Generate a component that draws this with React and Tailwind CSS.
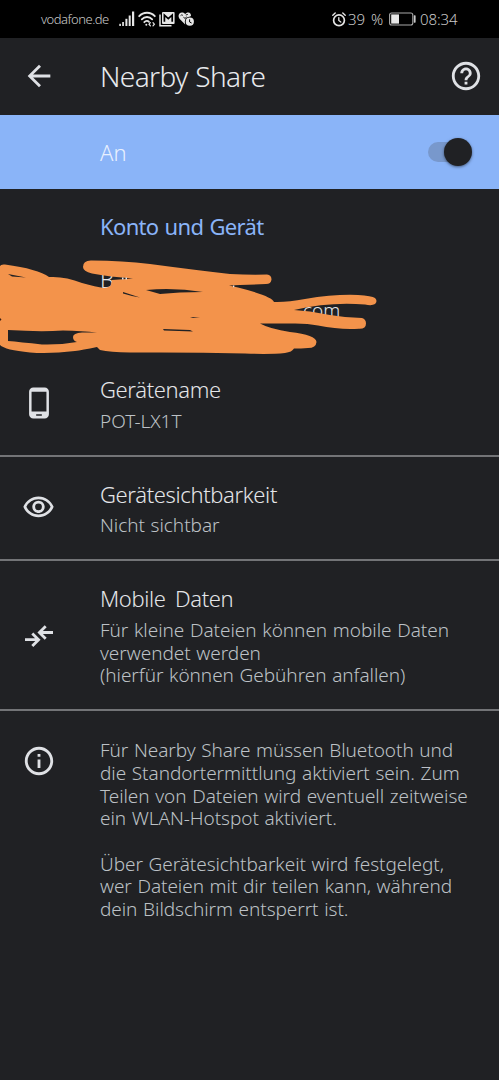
import React from "react";
import {
  MdArrowBack,
  MdHelpOutline,
  MdPhoneAndroid,
  MdOutlineVisibility,
  MdOutlineInfo
} from "react-icons/md";

const StatusBar = () => (
  <div className="h-[38px] bg-black flex items-center justify-between pl-[41px] pr-[41px] text-[#c9c9c9]">
    <div className="flex items-center">
      <span className="text-[13px] leading-none w-[78px] whitespace-nowrap tracking-[-0.5px]">vodafone.de</span>
      {/* Signal */}
      <svg className="w-4 h-4" viewBox="0 0 16 16" fill="#e6e6e6">
        <rect x="0.3" y="12.8" width="1.6" height="2.2" />
        <rect x="3.2" y="11" width="1.7" height="4" />
        <rect x="6.4" y="7.8" width="2" height="7.2" />
        <rect x="9.7" y="4.5" width="2" height="10.5" />
        <rect x="13" y="0.5" width="2.2" height="14.5" />
      </svg>
      {/* Wifi */}
      <svg className="w-[18px] h-4 ml-[3px]" viewBox="0 0 18 16" fill="none" stroke="#e6e6e6" strokeWidth="1.8" strokeLinecap="round">
        <path d="M1.2 5.2C5.4 0.6 12.6 0.6 16.8 5.2" />
        <path d="M3.8 8.4C6.7 5.2 11.3 5.2 14.2 8.4" />
        <path d="M6.3 11.2C7.8 9.6 9.8 9.6 11 10.8" />
        <circle cx="8.3" cy="13.7" r="1" fill="#e6e6e6" stroke="none" />
        <path d="M12.4 11.6L11 13.2L12.4 14.8M15 11.6L16.4 13.2L15 14.8" strokeWidth="1.2" />
      </svg>
      {/* Mail */}
      <svg className="w-4 h-4 ml-[3px]" viewBox="0 0 16 16">
        <path d="M1 3.5V14.8H12.5" fill="none" stroke="#e6e6e6" strokeWidth="1.5" />
        <rect x="3" y="1" width="12.6" height="12" rx="1" fill="#e6e6e6" />
        <path d="M5.4 10.8V4.2L9.3 7.6L13.2 4.2V10.8" fill="none" stroke="#000" strokeWidth="1.7" />
      </svg>
      {/* Heart with clock */}
      <svg className="w-[17px] h-4 ml-[3px]" viewBox="0 0 17 16">
        <path d="M7.2 13.5L1.5 7.8C-0.6 5 1 1.6 4 1.6C5.5 1.6 6.6 2.3 7.2 3.1C8 2.1 9 1.5 10.4 1.6C12 1.8 13 3 13 5L8 8Z" fill="#e6e6e6" />
        <path d="M2.6 4.6C3.4 3.6 4.2 3.8 5 4.6M5.4 6.2L7 7.4L8.8 5.8M7.8 4L9.8 3.4" fill="none" stroke="#000" strokeWidth="0.9" />
        <circle cx="11.8" cy="10.7" r="5" fill="#000" />
        <circle cx="11.8" cy="10.7" r="4.1" fill="#e6e6e6" />
        <path d="M11.6 8.3V11L13.6 12" fill="none" stroke="#000" strokeWidth="1" />
      </svg>
    </div>
    <div className="flex items-center text-[15px] leading-none">
      {/* Alarm */}
      <svg className="w-[14px] h-[15px]" viewBox="0 0 14 15" fill="none" stroke="#e6e6e6" strokeLinecap="round">
        <circle cx="7" cy="8.3" r="5.4" strokeWidth="1.7" />
        <path d="M0.8 3.2L3.2 1M13.2 3.2L10.8 1" strokeWidth="1.4" />
        <path d="M6.8 5.6V8.5L8.8 10" strokeWidth="1.3" />
      </svg>
      <span className="w-[41px] ml-[2px] whitespace-nowrap [word-spacing:2px]">39 %</span>
      {/* Battery */}
      <svg className="w-[27px] h-[14px]" viewBox="0 0 27 14">
        <rect x="0.6" y="1" width="23.2" height="12" rx="2" fill="none" stroke="#a8a8a8" strokeWidth="1.1" />
        <rect x="2.2" y="2.4" width="7.8" height="9.2" fill="#e8e8e8" />
        <rect x="24.8" y="3.3" width="1.8" height="7.4" rx="0.6" fill="#c9c9c9" />
      </svg>
      <span className="ml-[4px] w-[38px] whitespace-nowrap tracking-[-0.1px]">08:34</span>
    </div>
  </div>
);

const MobileDataIcon = () => (
  <svg className="w-[34px] h-[34px]" viewBox="0 0 34 34" fill="none" stroke="#dfe1e5" strokeWidth="2.8">
    <path d="M3 20.7H16M10.3 14.4L16.6 20.7L10.3 27" />
    <path d="M31 13.5H18M23.7 7.2L17.4 13.5L23.7 19.8" />
  </svg>
);

const Row = ({ icon, iconClass, title, children }) => (
  <div className="flex pt-[22px] pb-[22.5px] border-b-2 border-[#737477]">
    <div className={`w-[100px] pl-[22px] shrink-0 text-[#dfe1e5] ${iconClass}`}>{icon}</div>
    <div>
      <h2 className="text-[22px] leading-[30px] text-[#e4e5e8] whitespace-nowrap tracking-[-0.36px] [word-spacing:4px]">{title}</h2>
      <div className="mt-[5.5px] text-[19px] leading-[22.67px] text-[#bdc1c6] whitespace-nowrap tracking-[-0.04px] [word-spacing:0.8px]">
        {children}
      </div>
    </div>
  </div>
);

// Marker strokes that hide the account name and address
const Scribble = () => (
  <svg className="absolute left-0 top-0 w-[400px] h-[110px]" viewBox="0 250 400 110">
    <path
      fill="#f3934b"
      fillRule="evenodd"
      d="M0 266Q1 264 5 264.5Q38 269 49 277Q65 276 82 283Q96 287 104 288Q111 287 111 284L112 280L133 278.5L111 276.5L101 275L92 273.5Q83 271 83 267Q83 260 92 260.5Q122 260.500 150 264Q195 270 230 274Q250 275 267 274.500Q271.500 275 271.500 279.500Q271 284 266 284L240 285L229 285.500L238 287.500Q272 296 274 302Q287 302.500 305 299Q335 294 358 295Q372 296 375 298Q378 301 375 304Q372 306 365 304.500Q330 301.500 294 310L310 311.500Q328 315 345 317L362 318Q366 319 366 323.500Q366 329 359 328.700Q340 330 318 325.500Q306 323 290 323.500L260 323.500Q270 329 290 332Q316 335 316.500 342Q316 348 308 348L301 348.500L294 348.500Q292 352 285 353Q270 354.500 245 353.500Q190 352 130 352.500Q110 352 100 350L97 347Q82 350 75 351Q50 354 30 352.500Q5 350 0 345Z
         M8 330Q40 332 63 330.500Q82 331 97 332.500L82 332.500Q73 333 73 337Q73 341 77 342Q60 345 42 344.500Q20 342 8 341Z
         M8 274L26 277.500L12 276.500Z
         M146 290Q175 287.500 203 292L180 292.500L160 294Z
         M123 292L140 297.500L132 296L123 293.500Z
         M163 329L190 330L193 331.500L164 330.500Z
         M190 317L200 317.500L193 318Z"
    />
    <path d="M0 318L1.500 319.500L0 321Z" fill="#3a1d12" />
    <path d="M122 277.500h1.500v2h-1.500zM125.500 277.500h1.500v2h-1.500zM233 285.500h1.300v1.800h-1.300z" fill="#e4e5e8" />
  </svg>
);

const App = () => {
  return (
    <div className="w-[499px] h-[1080px] bg-[#202124] overflow-hidden font-['Noto_Sans','Open_Sans',sans-serif] font-light">
      <StatusBar />

      {/* Header */}
      <header className="h-[77px] flex items-center pl-[22px] pr-[16px] pb-[2px]">
        <MdArrowBack className="w-[34px] h-[34px] text-[#dfe1e5]" />
        <h1 className="ml-[44px] flex-1 text-[28px] leading-none text-[#e8eaed] tracking-[-0.6px] [word-spacing:1px]">Nearby Share</h1>
        <MdHelpOutline className="w-[34px] h-[34px] text-[#dfe1e5]" />
      </header>

      {/* Main switch */}
      <div className="h-[74px] bg-[#8ab4f8] flex items-center justify-between pl-[100px] pr-[27px]">
        <span className="text-[22px] leading-none text-[#e8f0fe]">An</span>
        <div className="w-[44px] h-7 flex items-center relative">
          <div className="w-[38px] h-5 rounded-full bg-[#7898cc]" />
          <div className="absolute right-0 top-0 w-7 h-7 rounded-full bg-[#202124] shadow-[0_1px_3px_rgba(0,0,0,0.5)]" />
        </div>
      </div>

      <h2 className="pl-[100px] pt-[22px] h-[61px] text-[22px] leading-[30px] font-normal text-[#8ab4f8] tracking-[-0.65px] [word-spacing:1px]">
        Konto und Gerät
      </h2>

      {/* Account */}
      <div className="relative h-[102px] pl-[100px] pt-[14px] text-[#e4e5e8]">
        <p className="text-[22px] leading-[30px]">B</p>
        <p className="pl-[203px] pt-px text-[19px] leading-[30px]">com</p>
        <Scribble />
      </div>

      <Row title="Gerätename" iconClass="pt-[12px]" icon={<MdPhoneAndroid className="w-[34px] h-[34px]" />}>
        POT-LX1T
      </Row>
      <Row title="Gerätesichtbarkeit" iconClass="pt-[12px]" icon={<MdOutlineVisibility className="w-[33px] h-[33px]" />}>
        Nicht sichtbar
      </Row>
      <Row title="Mobile Daten" iconClass="pt-[36px]" icon={<MobileDataIcon />}>
        Für kleine Dateien können mobile Daten<br />
        verwendet werden<br />
        (hierfür können Gebühren anfallen)
      </Row>

      <div className="flex pt-[28px]">
        <div className="w-[100px] pl-[22px] pt-[5px] shrink-0 text-[#dfe1e5]">
          <MdOutlineInfo className="w-[34px] h-[34px]" />
        </div>
        <p className="text-[19px] leading-[22.67px] text-[#bdc1c6] whitespace-nowrap tracking-[-0.06px] [word-spacing:0.8px]">
          Für Nearby Share müssen Bluetooth und<br />
          die Standortermittlung aktiviert sein. Zum<br />
          Teilen von Dateien wird eventuell zeitweise<br />
          ein WLAN-Hotspot aktiviert.<br />
          <br />
          Über Gerätesichtbarkeit wird festgelegt,<br />
          wer Dateien mit dir teilen kann, während<br />
          dein Bildschirm entsperrt ist.
        </p>
      </div>
    </div>
  );
};

export default App;
